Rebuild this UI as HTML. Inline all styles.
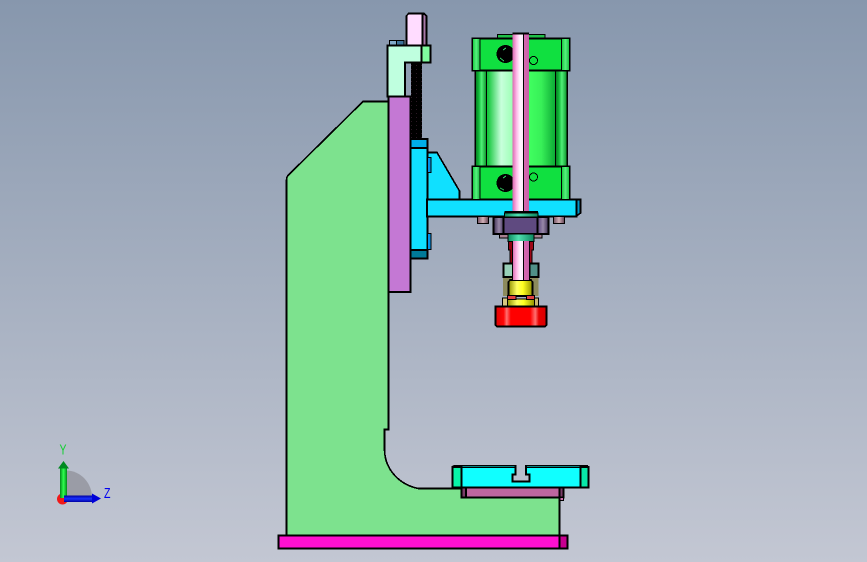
<!DOCTYPE html>
<html><head><meta charset="utf-8"><style>html,body{margin:0;padding:0;width:867px;height:562px;overflow:hidden;background:#a5afc0}svg{display:block}</style></head><body>
<svg width="867" height="562" viewBox="0 0 867 562" xmlns="http://www.w3.org/2000/svg" font-family="Liberation Sans, sans-serif">
<defs>
<linearGradient id="bg" x1="0" y1="0" x2="0" y2="1"><stop offset="0" stop-color="#8797ad"/><stop offset=".5" stop-color="#a5afc0"/><stop offset="1" stop-color="#c3c7d3"/></linearGradient>
<linearGradient id="barrel" x1="0" x2="1" y1="0" y2="0"><stop offset="0" stop-color="#0a9a2a"/><stop offset=".14" stop-color="#18c840"/><stop offset=".28" stop-color="#c8ffdc"/><stop offset=".4" stop-color="#a0ffb8"/><stop offset=".58" stop-color="#40ff60"/><stop offset=".72" stop-color="#38f058"/><stop offset=".86" stop-color="#10b038"/><stop offset="1" stop-color="#0a8a28"/></linearGradient>
<linearGradient id="strip" x1="0" x2="1" y1="0" y2="0"><stop offset="0" stop-color="#067a20"/><stop offset=".3" stop-color="#10b838"/><stop offset=".55" stop-color="#50f078"/><stop offset="1" stop-color="#0a9028"/></linearGradient>
<linearGradient id="hstrip" x1="0" x2="1" y1="0" y2="0"><stop offset="0" stop-color="#10c838"/><stop offset=".5" stop-color="#58f080"/><stop offset="1" stop-color="#10b838"/></linearGradient>
<linearGradient id="rod" x1="0" x2="1" y1="0" y2="0"><stop offset="0" stop-color="#d868b0"/><stop offset=".25" stop-color="#ffb8e8"/><stop offset=".45" stop-color="#fff4ff"/><stop offset=".66" stop-color="#ffe8fa"/><stop offset=".68" stop-color="#d868b0"/><stop offset="1" stop-color="#c860a8"/></linearGradient>
<linearGradient id="nut" x1="0" x2="1" y1="0" y2="0"><stop offset="0" stop-color="#3c2e50"/><stop offset=".1" stop-color="#9888a8"/><stop offset=".18" stop-color="#4e3e68"/><stop offset=".19" stop-color="#5f4a80"/><stop offset=".81" stop-color="#5f4a80"/><stop offset=".9" stop-color="#9888a8"/><stop offset="1" stop-color="#3c2e50"/></linearGradient>
<linearGradient id="collar" x1="0" x2="1" y1="0" y2="0"><stop offset="0" stop-color="#0c8860"/><stop offset=".4" stop-color="#50e0b0"/><stop offset="1" stop-color="#0c8860"/></linearGradient>
<linearGradient id="yel" x1="0" x2="1" y1="0" y2="0"><stop offset="0" stop-color="#909000"/><stop offset=".35" stop-color="#ffff60"/><stop offset=".6" stop-color="#ffff20"/><stop offset="1" stop-color="#909000"/></linearGradient>
<linearGradient id="red" x1="0" x2="1" y1="0" y2="0"><stop offset="0" stop-color="#e00000"/><stop offset=".16" stop-color="#ff0808"/><stop offset=".22" stop-color="#ff7070"/><stop offset=".3" stop-color="#ff0000"/><stop offset=".68" stop-color="#ff0000"/><stop offset=".78" stop-color="#ff7070"/><stop offset=".85" stop-color="#e80000"/><stop offset="1" stop-color="#d80000"/></linearGradient>
<linearGradient id="bolt" x1="0" x2="1" y1="0" y2="0"><stop offset="0" stop-color="#705060"/><stop offset=".5" stop-color="#d0b0b8"/><stop offset="1" stop-color="#604050"/></linearGradient>
<linearGradient id="dred" x1="0" x2="1" y1="0" y2="0"><stop offset="0" stop-color="#900010"/><stop offset="1" stop-color="#a00818"/></linearGradient>
<linearGradient id="gs" x1="0" x2="1" y1="0" y2="0"><stop offset="0" stop-color="#008a18"/><stop offset=".5" stop-color="#30ff50"/><stop offset="1" stop-color="#008a18"/></linearGradient>
<linearGradient id="bs" x1="0" x2="0" y1="0" y2="1"><stop offset="0" stop-color="#0000a0"/><stop offset=".5" stop-color="#1830ff"/><stop offset="1" stop-color="#0000a0"/></linearGradient>
<pattern id="thr" width="5" height="4" patternUnits="userSpaceOnUse"><rect width="5" height="4" fill="#000"/><rect x="1" y="1" width="1" height="1" fill="#2a1824"/></pattern>
</defs>
<rect width="867" height="562" fill="url(#bg)"/>

<g stroke="#000" stroke-width="1.6" stroke-linejoin="miter" shape-rendering="crispEdges">
<!-- body -->
<path d="M363 101.500H388.500V429.500H384.500V450C385 470 400 485 418.500 488.500H461.500V497.500H559.500V535.500H286.500V180C286.500 177 287.500 176 289 174.500Z" fill="#7de28e"/>
<!-- base plate -->
<rect x="278.500" y="535.500" width="281" height="13" fill="#ff10d0"/>
<rect x="559.500" y="535.500" width="8" height="13" fill="#c80090"/>
<!-- under table -->
<rect x="461.500" y="487.500" width="102" height="10" fill="#bd669f"/>
<rect x="461.500" y="487.500" width="4.500" height="10" fill="#7a3c68"/>
<rect x="559.500" y="487.500" width="4" height="10" fill="#7a3c68"/>
<rect x="560" y="497.500" width="3.500" height="3" fill="#d070b0" stroke-width=".8"/>
<!-- table -->
<path d="M452.500 487.500V467L454 465.700H515.500V474.500H512.500V481.500H529.500V474.500H526V465.700H587V467L588.500 468V487.500Z" fill="#10ffff"/>
<path d="M452.500 487.500V467H461.500V487.500Z" fill="#08f5a8"/>
<path d="M580.500 487.500V467H588.500V487.500Z" fill="#08e8a8"/>
<path d="M455 467.500H515M526 467.500H586" fill="none" stroke-width="1"/>
<!-- purple column -->
<rect x="388.500" y="96.500" width="22" height="195.500" fill="#c478d4"/>
<!-- thread -->
<rect x="411" y="62.500" width="11" height="77" fill="url(#thr)" stroke="none"/>
<!-- pin -->
<path d="M406.500 45.500V16L408.500 13.500H424L426.500 16V45.500Z" fill="#ffdcff"/>
<path d="M422.500 14V45.500H426.500V16L424 14Z" fill="#a878a8"/>
<!-- small blocks -->
<rect x="389.500" y="40.500" width="7" height="5" fill="#80a8c8" stroke-width="1"/>
<rect x="396.500" y="40.500" width="7.500" height="5" fill="#3c7098" stroke-width="1"/>
<!-- L bracket -->
<path d="M387.500 45.500H430.500V62.500H405V96.500H387.500Z" fill="#bfffdf"/>
<rect x="421.500" y="45.500" width="9" height="17" fill="#7ffc9e"/>
<!-- blue column -->
<path d="M427 152.500H437L459.500 191V199.500H427Z" fill="#10e0ff"/>
<rect x="410.500" y="139" width="17" height="9" fill="#00aee8"/>
<rect x="410.500" y="148" width="17" height="102" fill="#10e0ff"/>
<rect x="410.500" y="250" width="17" height="8.500" fill="#007a98"/>
<rect x="427.500" y="157.500" width="3.500" height="15" fill="#0090e8" stroke-width="1"/>
<rect x="427.500" y="233.500" width="3.500" height="16" fill="#0090e8" stroke-width="1"/>
<!-- plate -->
<path d="M576.500 199.500H580.500V213L576.500 216Z" fill="#0098c8"/>
<rect x="427" y="199.500" width="149.500" height="17" fill="#10e0ff"/>
<!-- bolts -->
<rect x="477.500" y="216.500" width="11" height="7" fill="url(#bolt)" stroke-width="1"/>
<rect x="553.500" y="216.500" width="11" height="7" fill="url(#bolt)" stroke-width="1"/>
<!-- nut -->
<rect x="499.500" y="233" width="42.500" height="5" fill="#a88090" stroke-width="1"/>
<rect x="493.500" y="217" width="55" height="17" fill="url(#nut)"/>
<path d="M503.500 217V234M537.500 217V234" fill="none"/>
<!-- cylinder -->
<rect x="497.500" y="34.500" width="47.500" height="4" fill="#20c048" stroke-width="1"/>
<rect x="475.500" y="70.500" width="91.500" height="96" fill="url(#barrel)"/>
<rect x="475.500" y="70.500" width="11" height="96" fill="url(#strip)" stroke-width="1"/>
<rect x="555.500" y="70.500" width="11.500" height="96" fill="url(#strip)" stroke-width="1"/>
<rect x="472.500" y="38.500" width="97" height="32" fill="#10e040"/>
<rect x="472.500" y="38.500" width="7.500" height="32" fill="url(#hstrip)" stroke-width="1"/>
<rect x="561.500" y="38.500" width="8" height="32" fill="url(#hstrip)" stroke-width="1"/>
<rect x="472.500" y="166.500" width="97" height="33" fill="#10e040"/>
<rect x="472.500" y="166.500" width="7.500" height="33" fill="url(#hstrip)" stroke-width="1"/>
<rect x="561.500" y="166.500" width="8" height="33" fill="url(#hstrip)" stroke-width="1"/>
<circle cx="505.500" cy="54" r="9" fill="#000" stroke="none"/>
<circle cx="505.500" cy="183" r="9" fill="#000" stroke="none"/>
<path d="M500 58l4 3M500 188l4 2M503 50l3 -2M503 178l3 -2" stroke="#30c060" stroke-width="1" fill="none"/>
<circle cx="533.500" cy="60.500" r="4" fill="none" stroke-width="1"/>
<circle cx="533.500" cy="177" r="4" fill="none" stroke-width="1"/>
<!-- lower stack -->
<path d="M508.500 241.500H533.500V250H532V263.500H510V250H508.500Z" fill="url(#dred)" stroke-width="1"/>
<rect x="508" y="234" width="26" height="7.500" fill="url(#collar)" stroke-width="1"/>
<rect x="504.500" y="213" width="33.500" height="4" fill="url(#collar)" stroke-width="1"/>
<rect x="503" y="277" width="35.500" height="19" fill="#8c8a5c" stroke="none"/>
<rect x="503.500" y="263.500" width="10" height="13.500" fill="#98d0b8"/>
<rect x="529.500" y="263.500" width="9" height="13.500" fill="#509088"/>
<path d="M508.500 296V282L510 280H531L532.500 282V296Z" fill="url(#yel)"/>
<!-- rod -->
<rect x="512.500" y="33.500" width="16.500" height="180" fill="url(#rod)" stroke="none"/>
<path d="M512.500 33.500H529" fill="none" stroke-width="2"/>
<rect x="512.500" y="241" width="17" height="39" fill="url(#rod)" stroke="none"/>
<path d="M523.500 34V213M523.500 241V280" stroke-width="1" fill="none"/>
<path d="M512.500 241V280M529.500 241V280" stroke-width="1" fill="none"/>
<rect x="504.500" y="211" width="33.500" height="2.500" fill="#000" stroke="none"/>
<!-- tip -->
<rect x="502.500" y="298" width="5" height="8.500" fill="#d8c880" stroke-width="1"/>
<rect x="533.500" y="298" width="5" height="8.500" fill="#c8b870" stroke-width="1"/>
<rect x="507.500" y="299" width="27" height="7.500" fill="url(#yel)" stroke-width="1"/>
<rect x="507.500" y="295.500" width="8.500" height="4" fill="#e04040" stroke-width="1"/>
<rect x="526.500" y="295.500" width="8" height="4" fill="#e04040" stroke-width="1"/>
<path d="M495.500 306.500H546.500V325L545 326.500H497L495.500 325Z" fill="url(#red)"/>
</g>

<!-- triad -->
<path d="M66 498V470.500A26 27 0 0 1 92 498Z" fill="#9a9ca6"/>
<circle cx="62.500" cy="499" r="5.500" fill="#f01818"/>
<rect x="60" y="468" width="7" height="30" fill="url(#gs)"/>
<path d="M63.500 461L58 468.500H69Z" fill="#008a20"/>
<rect x="64" y="495.500" width="29" height="6.500" fill="url(#bs)"/>
<path d="M101 498.500L92 493.500V503.500Z" fill="#0000d8"/>
<text x="59.500" y="454.500" font-size="15" fill="#10d030" textLength="7" lengthAdjust="spacingAndGlyphs">Y</text>
<text x="104" y="498" font-size="15" fill="#0000f0" textLength="6.500" lengthAdjust="spacingAndGlyphs">Z</text>
</svg>
</body></html>
